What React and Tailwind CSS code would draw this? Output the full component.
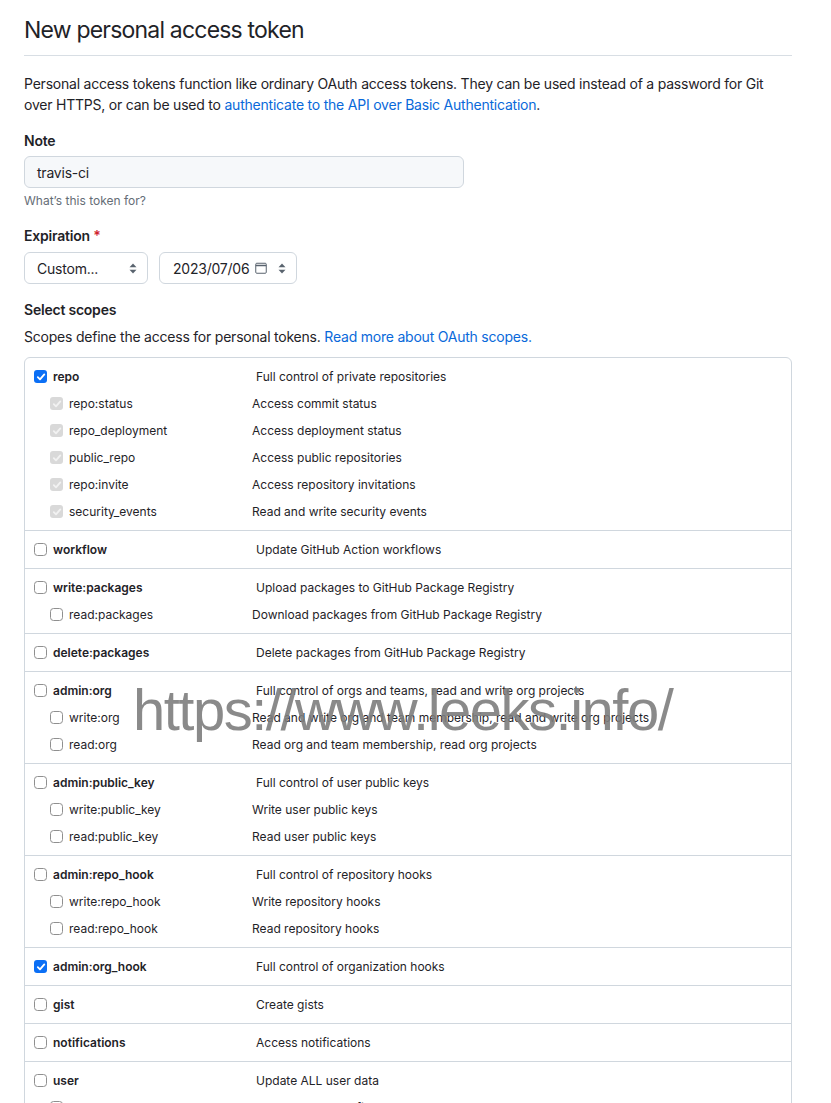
import React from 'react';

const FONT = { fontFamily: 'Inter, "Noto Sans", "Liberation Sans", sans-serif' };

const groups = [
  {
    name: 'repo', desc: 'Full control of private repositories', checked: true,
    subs: [
      ['repo:status', 'Access commit status'],
      ['repo_deployment', 'Access deployment status'],
      ['public_repo', 'Access public repositories'],
      ['repo:invite', 'Access repository invitations'],
      ['security_events', 'Read and write security events'],
    ],
    subsDisabled: true,
  },
  { name: 'workflow', desc: 'Update GitHub Action workflows' },
  {
    name: 'write:packages', desc: 'Upload packages to GitHub Package Registry',
    subs: [['read:packages', 'Download packages from GitHub Package Registry']],
  },
  { name: 'delete:packages', desc: 'Delete packages from GitHub Package Registry' },
  {
    name: 'admin:org', desc: 'Full control of orgs and teams, read and write org projects',
    subs: [
      ['write:org', 'Read and write org and team membership, read and write org projects'],
      ['read:org', 'Read org and team membership, read org projects'],
    ],
  },
  {
    name: 'admin:public_key', desc: 'Full control of user public keys',
    subs: [
      ['write:public_key', 'Write user public keys'],
      ['read:public_key', 'Read user public keys'],
    ],
  },
  {
    name: 'admin:repo_hook', desc: 'Full control of repository hooks',
    subs: [
      ['write:repo_hook', 'Write repository hooks'],
      ['read:repo_hook', 'Read repository hooks'],
    ],
  },
  { name: 'admin:org_hook', desc: 'Full control of organization hooks', checked: true },
  { name: 'gist', desc: 'Create gists' },
  { name: 'notifications', desc: 'Access notifications' },
  {
    name: 'user', desc: 'Update ALL user data',
    subs: [
      ['read:user', 'Read ALL user profile data'],
      ['user:email', 'Access user email addresses (read-only)'],
      ['user:follow', 'Follow and unfollow users'],
    ],
  },
];

function Check({ state }) {
  if (state === 'checked') {
    return (
      <span className="w-[13px] h-[13px] rounded-[3px] bg-[#0b6ff5] flex items-center justify-center shrink-0">
        <svg width="10" height="10" viewBox="0 0 10 10">
          <path d="M1.8 5.2 L4 7.4 L8.3 2.4" fill="none" stroke="#fff" strokeWidth="1.8" strokeLinecap="round" strokeLinejoin="round" />
        </svg>
      </span>
    );
  }
  if (state === 'disabled') {
    return (
      <span className="w-[13px] h-[13px] rounded-[3px] bg-[#d9d9d9] flex items-center justify-center shrink-0">
        <svg width="10" height="10" viewBox="0 0 10 10">
          <path d="M1.8 5.2 L4 7.4 L8.3 2.4" fill="none" stroke="#f2f2f2" strokeWidth="1.8" strokeLinecap="round" strokeLinejoin="round" />
        </svg>
      </span>
    );
  }
  return <span className="w-[13px] h-[13px] rounded-[3.5px] border border-[#8f8f8f] bg-white shrink-0" />;
}

function Arrows() {
  return (
    <svg width="8" height="11" viewBox="0 0 8 11">
      <path d="M4 0.5 L7.5 4.3 H0.5 Z" fill="#59636e" />
      <path d="M4 10.5 L7.5 6.7 H0.5 Z" fill="#59636e" />
    </svg>
  );
}

function Group({ g }) {
  return (
    <div className="border-t border-[#d0d7de] first:border-t-0 py-[5px]">
      <div className="flex items-center h-[27px]">
        <div className="w-[231px] pl-[9px] flex items-center gap-[6px] shrink-0">
          <Check state={g.checked ? 'checked' : 'off'} />
          <span className="font-semibold">{g.name}</span>
        </div>
        <span>{g.desc}</span>
      </div>
      {(g.subs || []).map(([n, d]) => (
        <div key={n} className="flex items-center h-[27px]">
          <div className="w-[227px] pl-[25px] flex items-center gap-[6px] shrink-0">
            <Check state={g.subsDisabled ? 'disabled' : 'off'} />
            <span>{n}</span>
          </div>
          <span>{d}</span>
        </div>
      ))}
    </div>
  );
}

export default function App() {
  return (
    <div className="relative bg-white text-[#1f2328] text-[14px] leading-[21px] tracking-[-0.22px] px-[24px] w-[816px]" style={FONT}>
      <div className="pt-[15px] pb-[10px] border-b border-[#d8dee4]">
        <h1 className="text-[23px] leading-[30px] font-normal tracking-[-0.8px]">New personal access token</h1>
      </div>

      <p className="mt-[17px] pr-[20px]">
        Personal access tokens function like ordinary OAuth access tokens. They can be used instead of a password for Git over HTTPS, or can be used to{' '}
        <a className="text-[#0969da]">authenticate to the API over Basic Authentication</a>.
      </p>

      <div className="mt-[16px] font-semibold leading-[20px]">Note</div>
      <div className="mt-[5px] w-[440px] h-[32px] rounded-[6px] border border-[#d0d7de] bg-[#f6f8fa] px-[12px] flex items-center">
        travis-ci
      </div>
      <div className="mt-[4px] text-[12px] leading-[18px] tracking-normal text-[#656d76]">What’s this token for?</div>

      <div className="mt-[16px] font-semibold leading-[20px]">
        Expiration <span className="text-[#cf222e]">*</span>
      </div>
      <div className="mt-[6px] flex gap-[11px]">
        <div className="w-[124px] h-[32px] rounded-[6px] border border-[#d0d7de] bg-white pl-[12px] pr-[10px] flex items-center justify-between">
          <span>Custom...</span>
          <Arrows />
        </div>
        <div className="w-[138px] h-[32px] rounded-[6px] border border-[#d0d7de] bg-white pl-[13px] pr-[10px] flex items-center">
          <span>2023/07/06</span>
          <svg width="12" height="12" viewBox="0 0 12 12" className="ml-[6px]">
            <rect x="0.75" y="1.25" width="10.5" height="10" rx="1" fill="none" stroke="#59636e" strokeWidth="1" />
            <path d="M0.75 3.5 H11.25" stroke="#59636e" strokeWidth="1.5" />
          </svg>
          <span className="ml-auto"><Arrows /></span>
        </div>
      </div>

      <div className="mt-[16px] font-semibold leading-[20px]">Select scopes</div>
      <p className="mt-[6px]">
        Scopes define the access for personal tokens. <a className="text-[#0969da]">Read more about OAuth scopes.</a>
      </p>

      <div className="mt-[10px] border border-[#d0d7de] rounded-[6px] text-[12px] leading-[18px] tracking-normal">
        {groups.map((g) => (
          <Group key={g.name} g={g} />
        ))}
      </div>

      <div
        className="absolute left-[133px] top-[681px] text-[58px] leading-none tracking-[-1.5px] text-[#7d7d7d]/90 pointer-events-none whitespace-nowrap"
        style={{ fontFamily: '"Liberation Sans", Arial, sans-serif' }}
      >
        https://www.leeks.info/
      </div>
    </div>
  );
}
